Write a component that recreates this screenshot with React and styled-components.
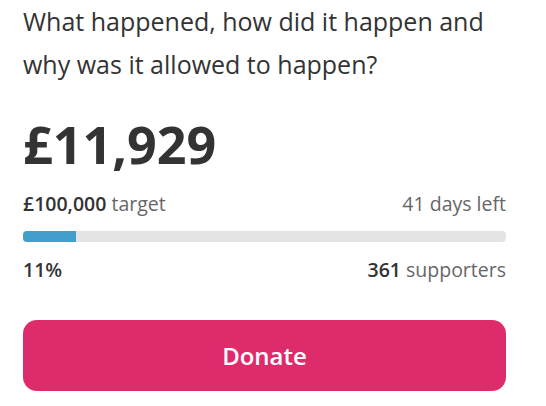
import styled, { createGlobalStyle } from 'styled-components';

const GlobalStyle = createGlobalStyle`
  body {
    margin: 0;
    background: #fff;
    font-family: 'Open Sans', 'Lato', sans-serif;
    color: #333;
  }
`

const App = () => {
  const raised = 11929;
  const target = 100000;
  const percent = Math.floor((raised / target) * 100);

  return (
    <>
      <GlobalStyle />
      <Card>
        <Question>What happened, how did it happen and why was it allowed to happen?</Question>
        <Amount>£11,929</Amount>
        <Row $gap={18}>
          <span><Strong>£100,000</Strong> <Muted>target</Muted></span>
          <Muted>41 days left</Muted>
        </Row>
        <Track>
          <Fill style={{ width: `${percent}%` }} />
        </Track>
        <Row $gap={16}>
          <Strong>{percent}%</Strong>
          <span><Strong>361</Strong> <Muted>supporters</Muted></span>
        </Row>
        <DonateButton>Donate</DonateButton>
      </Card>
    </>
  )
}

const Card = styled.div`
  width: 483px;
  padding: 0 23px;
  display: flex;
  flex-direction: column;
`
const Question = styled.h2`
  margin: 0;
  font-size: 25px;
  font-weight: 400;
  line-height: 43px;
  color: #333;
`
const Amount = styled.div`
  margin-top: 28px;
  font-size: 52px;
  font-weight: 700;
  line-height: 60px;
  color: #333;
`
const Row = styled.div`
  display: flex;
  justify-content: space-between;
  align-items: baseline;
  font-size: 19.5px;
  line-height: 24px;
  margin-top: ${p => p.$gap}px;
`
const Strong = styled.span`
  font-weight: 600;
  color: #333;
`
const Muted = styled.span`
  color: #666;
`
const Track = styled.div`
  margin-top: 15px;
  height: 11px;
  border-radius: 4px;
  background: #e4e4e4;
  overflow: hidden;
`
const Fill = styled.div`
  height: 100%;
  background: #429fcb;
`
const DonateButton = styled.button`
  margin-top: 38px;
  height: 71px;
  border: none;
  border-radius: 14px;
  background: #de2b6b;
  color: #fff;
  font-family: 'Open Sans', sans-serif;
  font-size: 24px;
  font-weight: 600;
  cursor: pointer;
`

export default App;
